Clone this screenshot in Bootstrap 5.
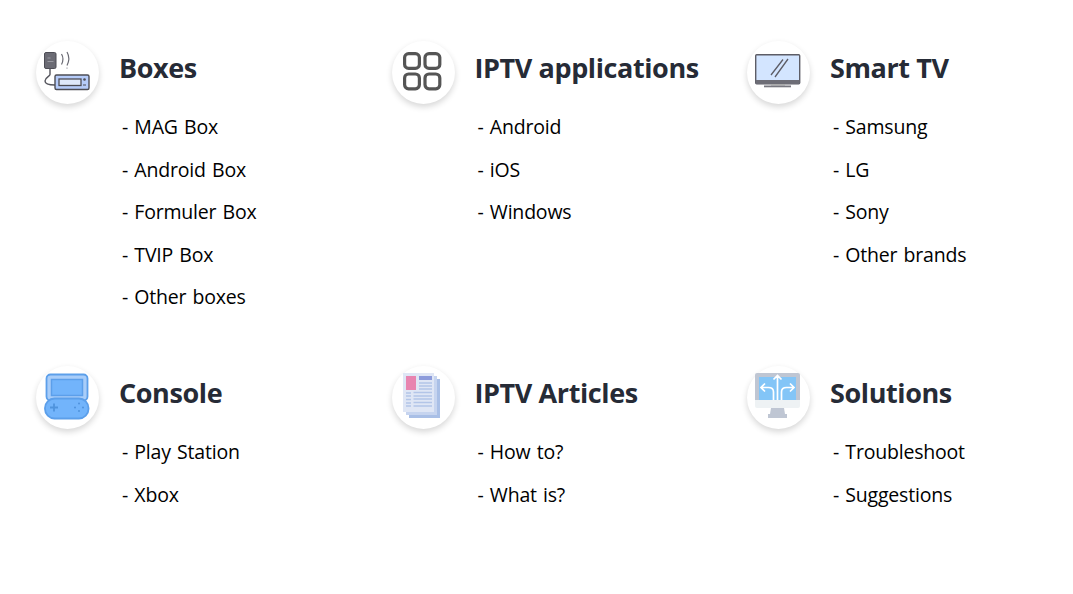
<!DOCTYPE html>
<html lang="en"><head><meta charset="utf-8"><title>Categories</title>
<link href="https://cdn.jsdelivr.net/npm/bootstrap@5.3.0/dist/css/bootstrap.min.css" rel="stylesheet">
<style>
body{font-family:"Open Sans","Noto Sans",sans-serif;background:#fff;overflow:hidden}
.sheet{padding:41px 0 0 36px}
.cat-row{--bs-gutter-x:0;margin:0}
.cat-row+.cat-row{margin-top:47.5px}
.cat-col{width:355.5px;flex:none}
.disc{width:63px;height:63px;border-radius:50%;background:#fff;box-shadow:0 3px 6px rgba(0,0,0,.16);flex:none;margin-right:20px}
.disc svg{display:block;width:63px;height:63px}
.cat-title{font-size:27px;font-weight:700;color:#262b36;line-height:54px;margin:0;letter-spacing:-.4px;white-space:nowrap}
.cat-list{margin:11px 0 0 3px;padding:0;list-style:none}
.cat-list li{font-size:19.5px;font-weight:500;line-height:42.5px;height:42.5px;color:#000;letter-spacing:-.2px;word-spacing:1.400px;white-space:nowrap}
.cat-list li a{color:inherit;text-decoration:none}
</style></head><body>
<main class="sheet">
<div class="row cat-row flex-nowrap">
<section class="cat-col d-flex">
<div class="disc"><svg viewBox="0 0 63 63" fill="none"><rect x="8.500" y="11.500" width="11.500" height="16" rx="1.500" fill="#6b6b74" stroke="#4d4d55"/><path d="M11.500 17h3M11.500 20.500h6" stroke="#9a9aa2" stroke-width="1"/><path d="M14 27.500v6c0 2-5 2.500-5 6.500 0 3.500 4 4 10 4" stroke="#55555d" stroke-width="1.400"/><rect x="19" y="34" width="34" height="14.500" rx="1.500" fill="#b6ccfa" stroke="#4d4d55" stroke-width="1.400"/><rect x="23" y="38" width="22" height="6.500" fill="#dfe9fb" stroke="#4d4d55" stroke-width="1.300"/><circle cx="48.500" cy="38.500" r="1.300" fill="#4d4d55"/><path d="M47 44h3" stroke="#4d4d55"/><path d="M25.500 13c1.800 3 1.800 7 0 10.500M31 11c2.300 4 2.300 9 0 13.500" stroke="#6b6b74" stroke-width="1.200"/><circle cx="31" cy="27" r=".6" fill="#6b6b74"/></svg></div>
<div><h3 class="cat-title">Boxes</h3><ul class="cat-list"><li><a href="#">- MAG Box</a></li><li><a href="#">- Android Box</a></li><li><a href="#">- Formuler Box</a></li><li><a href="#">- TVIP Box</a></li><li><a href="#">- Other boxes</a></li></ul></div>
</section>
<section class="cat-col d-flex">
<div class="disc"><svg viewBox="0 0 63 63" fill="none" stroke="#555" stroke-width="3.200"><rect x="12.600" y="12.600" width="14.800" height="14.800" rx="4"/><rect x="33" y="12.600" width="14.800" height="14.800" rx="4"/><rect x="12.600" y="33" width="14.800" height="14.800" rx="4"/><rect x="33" y="33" width="14.800" height="14.800" rx="4"/></svg></div>
<div><h3 class="cat-title">IPTV applications</h3><ul class="cat-list"><li><a href="#">- Android</a></li><li><a href="#">- iOS</a></li><li><a href="#">- Windows</a></li></ul></div>
</section>
<section class="cat-col d-flex">
<div class="disc"><svg viewBox="0 0 63 63" fill="none"><rect x="8.700" y="13.700" width="44" height="29" rx="1" fill="#d3e5ff" stroke="#5d5d66" stroke-width="1.400"/><path d="M8.700 39h44v3a1 1 0 0 1-1 1h-42a1 1 0 0 1-1-1z" fill="#6d6d76"/><path d="M24 34l12-15.500M28 36l13-18" stroke="#5d5d66" stroke-width="1.300"/><path d="M24 43v1.500h14V43" fill="#aaa"/><rect x="17" y="44.500" width="27" height="1.800" fill="#77777f"/></svg></div>
<div><h3 class="cat-title">Smart TV</h3><ul class="cat-list"><li><a href="#">- Samsung</a></li><li><a href="#">- LG</a></li><li><a href="#">- Sony</a></li><li><a href="#">- Other brands</a></li></ul></div>
</section>
</div>
<div class="row cat-row flex-nowrap">
<section class="cat-col d-flex">
<div class="disc"><svg viewBox="0 0 63 63"><rect x="10.500" y="8.500" width="41" height="26" rx="4" fill="#a8cdf9" stroke="#5c9fea" stroke-width="1.800"/><rect x="15.500" y="13.500" width="31" height="16" fill="#72b4fb" stroke="#5c9fea" stroke-width="1.500"/><rect x="9" y="32.500" width="43.500" height="20" rx="9.500" fill="#72b4fb" stroke="#5c9fea" stroke-width="1.800"/><path d="M14 41.500h8M18 37.500v8" stroke="#4f93dd" stroke-width="1.800"/><circle cx="43" cy="37.500" r="1" fill="#4f93dd"/><circle cx="43" cy="45" r="1" fill="#4f93dd"/><circle cx="39" cy="41.500" r="1" fill="#4f93dd"/><circle cx="47" cy="41.500" r="1" fill="#4f93dd"/></svg></div>
<div><h3 class="cat-title">Console</h3><ul class="cat-list"><li><a href="#">- Play Station</a></li><li><a href="#">- Xbox</a></li></ul></div>
</section>
<section class="cat-col d-flex">
<div class="disc"><svg viewBox="0 0 63 63"><rect x="17" y="13" width="31" height="39" fill="#a9bfe6"/><rect x="14" y="10" width="31" height="39" fill="#c6d4ef"/><rect x="11" y="7" width="31" height="39" fill="#dfe6f5"/><rect x="14" y="10" width="10" height="14" fill="#e884b0"/><rect x="27" y="10" width="13" height="4" fill="#8c9bdb"/><path d="M27 17h13M27 20h13M27 23h13M21.500 26.500h18.500M21.500 30h18.500M21.500 33h18.500M21.500 36.500h18.500M21.500 40h18.500M14 27h5M14 30h5M14 33.500h5M14 37h5M14 40h5" stroke="#b3c5e8" stroke-width="1.300"/></svg></div>
<div><h3 class="cat-title">IPTV Articles</h3><ul class="cat-list"><li><a href="#">- How to?</a></li><li><a href="#">- What is?</a></li></ul></div>
</section>
<section class="cat-col d-flex">
<div class="disc"><svg viewBox="0 0 63 63" fill="none"><path d="M8 9a2 2 0 0 1 2-2h41a2 2 0 0 1 2 2v26H8z" fill="#bfc6d3"/><path d="M8 34h45v6a2 2 0 0 1-2 2H10a2 2 0 0 1-2-2z" fill="#eef2f4"/><rect x="12" y="11" width="37" height="23" fill="#83c5f7"/><path d="M24 42h13l1 6H23z" fill="#bfc6d3"/><rect x="21" y="48" width="19" height="4" fill="#bfc6d3"/><path d="M30.500 34V9.500M26.500 13.500l4-4 4 4M26.500 34V26c0-3-2-4.500-5-4.500H14M18 17.500l-4 4 4 4M34.500 34V26c0-3 2-4.500 5-4.500H47M43 17.500l4 4-4 4" stroke="#fff" stroke-width="1.700"/></svg></div>
<div><h3 class="cat-title">Solutions</h3><ul class="cat-list"><li><a href="#">- Troubleshoot</a></li><li><a href="#">- Suggestions</a></li></ul></div>
</section>
</div>
</main>
<script src="https://cdn.jsdelivr.net/npm/bootstrap@5.3.0/dist/js/bootstrap.bundle.min.js"></script>
</body></html>
